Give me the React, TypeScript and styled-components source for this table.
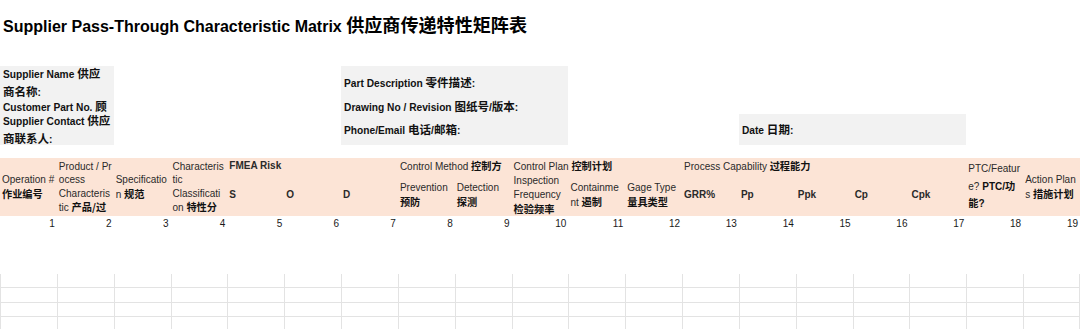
import React from "react";
import styled, { createGlobalStyle } from "styled-components";

const GlobalStyle = createGlobalStyle`
  html, body { margin: 0; padding: 0; background: #ffffff; }
  body {
    font-family: "Liberation Sans", Arial, "Noto Sans CJK SC", sans-serif;
    color: #1a1a1a;
    width: 1080px;
    height: 329px;
    overflow: hidden;
  }
`;

const Page = styled.div`
  width: 1080px;
  display: flex;
  flex-direction: column;
`;

const Title = styled.h1`
  margin: 0;
  padding: 15px 0 0 3px;
  font-size: 16px;
  line-height: 18px;
  font-weight: 700;
  color: #000;
  white-space: nowrap;
`;

const Zh = styled.span<{ $scale?: number }>`
  font-family: "Noto Sans CJK SC", sans-serif;
  font-size: ${(p) => p.$scale ?? 1.13}em;
`;

const Sheet = styled.div`
  display: grid;
  grid-template-columns: repeat(19, 1fr);
`;

const InfoGrid = styled(Sheet)`
  margin-top: 30px;
  grid-template-rows: 34px 14px 31px;
`;

const InfoCell = styled.div<{ $col: string; $row: number; $lh?: number; $clip?: boolean }>`
  grid-column: ${(p) => p.$col};
  grid-row: ${(p) => p.$row};
  background: #f2f2f2;
  overflow: ${(p) => (p.$clip ? "hidden" : "visible")};
  display: flex;
  flex-direction: column;
  justify-content: center;
  padding-left: 3px;
  font-size: 10.2px;
  font-weight: 700;
  line-height: ${(p) => p.$lh ?? 17}px;
  white-space: nowrap;
  color: #111;
`;

const HeaderGrid = styled(Sheet)`
  margin-top: 13px;
  grid-template-rows: 16px 42px;
  background: #fce4d6;
`;

const HCell = styled.div<{ $col: string; $row: string; $bold?: boolean; $lh?: number }>`
  grid-column: ${(p) => p.$col};
  grid-row: ${(p) => p.$row};
  display: flex;
  flex-direction: column;
  justify-content: center;
  padding: 0 2px;
  min-width: 0;
  font-size: 10px;
  line-height: ${(p) => p.$lh ?? 14}px;
  font-weight: ${(p) => (p.$bold ? 700 : 400)};
  white-space: nowrap;
  color: #2a2a2a;
`;

const Line = styled.div``;

const B = styled.b`
  font-weight: 700;
  color: #111;
`;

const NumRow = styled(Sheet)`
  height: 15px;
`;

const Num = styled.div`
  text-align: right;
  padding-right: 2px;
  font-size: 10px;
  line-height: 15px;
  color: #1a1a1a;
`;

const GridArea = styled(Sheet)`
  margin-top: 43px;
`;

const GridCell = styled.div<{ $last: boolean }>`
  box-sizing: border-box;
  height: 14.33px;
  border-left: 1px solid #e3e3e3;
  border-bottom: 1px solid #e3e3e3;
  border-right: ${(p) => (p.$last ? "1px solid #e3e3e3" : "none")};
`;

type Head = {
  col: string;
  row: string;
  bold?: boolean;
  lh?: number;
  lines: React.ReactNode[];
};

const zh = (t: string) => (
  <B>
    <Zh $scale={1.02}>{t}</Zh>
  </B>
);

const heads: Head[] = [
  { col: "1", row: "1 / 3", lines: ["Operation #", zh("作业编号")] },
  {
    col: "2",
    row: "1 / 3",
    lh: 13.5,
    lines: ["Product / Pr", "ocess", "Characteris", <>tic {zh("产品/过")}</>],
  },
  { col: "3", row: "1 / 3", lines: ["Specificatio", <>n {zh("规范")}</>] },
  {
    col: "4",
    row: "1 / 3",
    lh: 13.5,
    lines: ["Characteris", "tic", "Classificati", <>on {zh("特性分")}</>],
  },
  { col: "5 / 8", row: "1", bold: true, lines: ["FMEA Risk"] },
  { col: "5", row: "2", bold: true, lines: ["S"] },
  { col: "6", row: "2", bold: true, lines: ["O"] },
  { col: "7", row: "2", bold: true, lines: ["D"] },
  { col: "8 / 10", row: "1", lines: [<>Control Method {zh("控制方")}</>] },
  { col: "8", row: "2", lines: ["Prevention", zh("预防")] },
  { col: "9", row: "2", lines: ["Detection", zh("探测")] },
  { col: "10 / 13", row: "1", lines: [<>Control Plan {zh("控制计划")}</>] },
  { col: "10", row: "2", lines: ["Inspection", "Frequency", zh("检验频率")] },
  { col: "11", row: "2", lines: ["Containme", <>nt {zh("遏制")}</>] },
  { col: "12", row: "2", lines: ["Gage Type", zh("量具类型")] },
  { col: "13 / 18", row: "1", lines: [<>Process Capability {zh("过程能力")}</>] },
  { col: "13", row: "2", bold: true, lines: ["GRR%"] },
  { col: "14", row: "2", bold: true, lines: ["Pp"] },
  { col: "15", row: "2", bold: true, lines: ["Ppk"] },
  { col: "16", row: "2", bold: true, lines: ["Cp"] },
  { col: "17", row: "2", bold: true, lines: ["Cpk"] },
  {
    col: "18",
    row: "1 / 3",
    lh: 16.5,
    lines: [
      "PTC/Featur",
      <>
        e? <B>PTC/<Zh $scale={1.02}>功</Zh></B>
      </>,
      <B>
        <Zh $scale={1.02}>能</Zh>?
      </B>,
    ],
  },
  { col: "19", row: "1 / 3", lines: ["Action Plan", <>s {zh("措施计划")}</>] },
];

const cols = Array.from({ length: 19 }, (_, i) => i + 1);
const gridRows = [0, 1, 2, 3];

export default function App() {
  return (
    <>
      <GlobalStyle />
      <Page>
        <Title>
          Supplier Pass-Through Characteristic Matrix <Zh>供应商传递特性矩阵表</Zh>
        </Title>

        <InfoGrid>
          <InfoCell $col="1 / 3" $row={1} $clip>
            <Line>Supplier Name <Zh>供应</Zh></Line>
            <Line><Zh>商名称</Zh>:</Line>
          </InfoCell>
          <InfoCell $col="1 / 3" $row={2} $lh={14}>
            <Line>Customer Part No. <Zh>顾</Zh></Line>
          </InfoCell>
          <InfoCell $col="1 / 3" $row={3} $clip>
            <Line>Supplier Contact <Zh>供应</Zh></Line>
            <Line><Zh>商联系人</Zh>:</Line>
          </InfoCell>

          <InfoCell $col="7 / 11" $row={1}>
            <Line>Part Description <Zh>零件描述</Zh>:</Line>
          </InfoCell>
          <InfoCell $col="7 / 11" $row={2} $lh={14}>
            <Line>Drawing No / Revision <Zh>图纸号</Zh>/<Zh>版本</Zh>:</Line>
          </InfoCell>
          <InfoCell $col="7 / 11" $row={3}>
            <Line>Phone/Email <Zh>电话</Zh>/<Zh>邮箱</Zh>:</Line>
          </InfoCell>

          <InfoCell $col="14 / 18" $row={3}>
            <Line>Date <Zh>日期</Zh>:</Line>
          </InfoCell>
        </InfoGrid>

        <HeaderGrid>
          {heads.map((h, i) => (
            <HCell key={i} $col={h.col} $row={h.row} $bold={h.bold} $lh={h.lh}>
              {h.lines.map((l, j) => (
                <Line key={j}>{l}</Line>
              ))}
            </HCell>
          ))}
        </HeaderGrid>

        <NumRow>
          {cols.map((c) => (
            <Num key={c}>{c}</Num>
          ))}
        </NumRow>

        <GridArea>
          {gridRows.map((r) =>
            cols.map((c) => <GridCell key={`${r}-${c}`} $last={c === 19} />)
          )}
        </GridArea>
      </Page>
    </>
  );
}
